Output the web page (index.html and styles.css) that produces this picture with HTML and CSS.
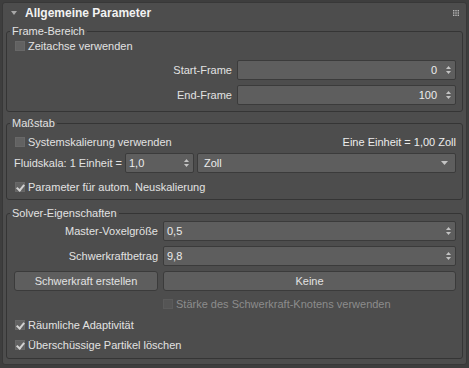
FILE: index.html
```html
<!DOCTYPE html>
<html lang="de">
  <head>
    <meta charset="UTF-8" />
    <meta name="viewport" content="width=device-width, initial-scale=1.0" />
    <title>Allgemeine Parameter</title>
    <link rel="stylesheet" href="styles.css">
  </head>
  <body>
    <div class="rollout">
      <div class="rollout-head">
        <span class="caret"></span>
        <span class="rollout-title">Allgemeine Parameter</span>
        <svg class="grip" width="6" height="6" viewBox="0 0 6 6">
          <g fill="#b8b8b8">
            <rect x="0" y="0" width="1.4" height="1.4" /><rect x="2.3" y="0" width="1.4" height="1.4" /><rect x="4.6" y="0" width="1.4" height="1.4" />
            <rect x="0" y="2.3" width="1.4" height="1.4" /><rect x="2.3" y="2.3" width="1.4" height="1.4" /><rect x="4.6" y="2.3" width="1.4" height="1.4" />
            <rect x="0" y="4.6" width="1.4" height="1.4" /><rect x="2.3" y="4.6" width="1.4" height="1.4" /><rect x="4.6" y="4.6" width="1.4" height="1.4" />
          </g>
        </svg>
      </div>

      <!-- Frame-Bereich -->
      <fieldset class="group group-frame">
        <legend>Frame-Bereich</legend>
        <label class="check"><span class="box"></span>Zeitachse verwenden</label>
        <div class="field-row frame-row">
          <span class="field-label">Start-Frame</span>
          <div class="input spinner">
            <span class="value">0</span>
            <svg class="arrows" width="5" height="10" viewBox="0 0 5 10"><polygon points="0,4 2.5,1 5,4" /><polygon points="0,6 2.5,9 5,6" /></svg>
          </div>
        </div>
        <div class="field-row frame-row">
          <span class="field-label">End-Frame</span>
          <div class="input spinner">
            <span class="value">100</span>
            <svg class="arrows" width="5" height="10" viewBox="0 0 5 10"><polygon points="0,4 2.5,1 5,4" /><polygon points="0,6 2.5,9 5,6" /></svg>
          </div>
        </div>
      </fieldset>

      <!-- Maßstab -->
      <fieldset class="group group-scale">
        <legend>Maßstab</legend>
        <div class="scale-top">
          <label class="check"><span class="box"></span>Systemskalierung verwenden</label>
          <span class="unit-info">Eine Einheit = 1,00 Zoll</span>
        </div>
        <div class="fluid-row">
          <span class="fluid-label">Fluidskala: 1 Einheit =</span>
          <div class="input spinner left">
            <span class="value">1,0</span>
            <svg class="arrows" width="5" height="10" viewBox="0 0 5 10"><polygon points="0,4 2.5,1 5,4" /><polygon points="0,6 2.5,9 5,6" /></svg>
          </div>
          <div class="input dropdown">
            <span class="value">Zoll</span>
            <svg class="drop-arrow" width="7" height="4" viewBox="0 0 7 4"><polygon points="0,0 7,0 3.5,4" /></svg>
          </div>
        </div>
        <label class="check check-last"><span class="box checked"></span>Parameter für autom. Neuskalierung</label>
      </fieldset>

      <!-- Solver-Eigenschaften -->
      <fieldset class="group group-solver">
        <legend>Solver-Eigenschaften</legend>
        <div class="field-row solver-row">
          <span class="field-label">Master-Voxelgröße</span>
          <div class="input spinner left">
            <span class="value">0,5</span>
            <svg class="arrows" width="5" height="10" viewBox="0 0 5 10"><polygon points="0,4 2.5,1 5,4" /><polygon points="0,6 2.5,9 5,6" /></svg>
          </div>
        </div>
        <div class="field-row solver-row">
          <span class="field-label">Schwerkraftbetrag</span>
          <div class="input spinner left">
            <span class="value">9,8</span>
            <svg class="arrows" width="5" height="10" viewBox="0 0 5 10"><polygon points="0,4 2.5,1 5,4" /><polygon points="0,6 2.5,9 5,6" /></svg>
          </div>
        </div>
        <div class="field-row solver-row">
          <button class="btn">Schwerkraft erstellen</button>
          <button class="btn">Keine</button>
        </div>
        <div class="field-row solver-row check-row">
          <span></span>
          <label class="check disabled"><span class="box"></span>Stärke des Schwerkraft-Knotens verwenden</label>
        </div>
        <label class="check"><span class="box checked"></span>Räumliche Adaptivität</label>
        <label class="check check-tight"><span class="box checked"></span>Überschüssige Partikel löschen</label>
      </fieldset>
    </div>
  </body>
</html>
```

FILE: styles.css
```css
* {
  box-sizing: border-box;
  margin: 0;
  padding: 0;
}

body {
  background-color: #3e3e3e;
  font-family: "Liberation Sans", Arial, sans-serif;
  font-size: 11px;
  color: #e2e2e2;
}

.rollout {
  margin: 2px 2px 0 2px;
  padding: 0 3px 5px 3px;
  background-color: #4d4d4d;
  border: 1px solid #383838;
  border-radius: 3px;
}

.rollout-head {
  display: flex;
  align-items: center;
  height: 20px;
}

.caret {
  width: 0;
  height: 0;
  margin-left: 5px;
  border-left: 3px solid transparent;
  border-right: 3px solid transparent;
  border-top: 4px solid #a8a8a8;
}

.rollout-title {
  margin-left: 8px;
  font-size: 12px;
  font-weight: bold;
  color: #f2f2f2;
}

.grip {
  margin-left: auto;
  margin-right: 4px;
}

.group {
  border: 1px solid #353535;
  border-radius: 3px;
  padding: 0 6px 0 7px;
}

.group legend {
  margin-left: -4px;
  padding: 0 2px;
  line-height: 14px;
  font-size: 11px;
  color: #e2e2e2;
}

.group-frame {
  margin-top: 1px;
  padding-bottom: 6px;
}

.group-scale {
  margin-top: 4px;
  padding-top: 4px;
  padding-bottom: 4px;
}

.group-solver {
  margin-top: 6px;
  padding-top: 1px;
  padding-bottom: 5px;
}

.check {
  display: flex;
  align-items: center;
  height: 16px;
  margin-left: 1px;
}

.box {
  width: 10px;
  height: 10px;
  margin-right: 3px;
  background-color: #626262;
  border: 1px solid #686868;
  position: relative;
}

.box.checked::after {
  content: "";
  position: absolute;
  left: 2px;
  top: 0px;
  width: 3px;
  height: 6px;
  border-right: 2px solid #d2d2d2;
  border-bottom: 2px solid #d2d2d2;
  transform: rotate(40deg);
}

.check.disabled {
  color: #8c8c8c;
  margin-left: 0;
}

.check.disabled .box {
  background-color: #555555;
  border-color: #5b5b5b;
}

.field-row {
  display: grid;
  column-gap: 5px;
  align-items: center;
}

.frame-row {
  grid-template-columns: 1fr 219px;
  margin-top: 5px;
}

.frame-row:first-of-type {
  margin-top: 6px;
}

.field-label {
  text-align: right;
}

.input {
  display: flex;
  align-items: center;
  height: 20px;
  background-color: #5e5e5e;
  border: 1px solid #3b3b3b;
  border-radius: 2px;
  color: #ececec;
}

.spinner {
  justify-content: flex-end;
  padding-right: 4px;
}

.spinner .value {
  margin-right: 9px;
}

.spinner.left {
  justify-content: space-between;
  padding-left: 3px;
}

.arrows {
  fill: #c4c4c4;
}

.scale-top {
  display: flex;
  justify-content: space-between;
  align-items: center;
}

.unit-info {
  color: #ececec;
}

.fluid-row {
  display: flex;
  align-items: center;
  margin-top: 3px;
}

.fluid-label {
  width: 111px;
}

.fluid-row .spinner {
  width: 69px;
}

.dropdown {
  flex: 1;
  margin-left: 3px;
  justify-content: space-between;
  padding: 0 7px 0 6px;
}

.drop-arrow {
  fill: #c4c4c4;
}

.check-last {
  margin-top: 6px;
}

.solver-row {
  grid-template-columns: 144px 1fr;
  margin-top: 5px;
}

.solver-row:first-of-type {
  margin-top: 0;
}

.btn {
  height: 20px;
  background-color: #5e5e5e;
  border: 1px solid #3b3b3b;
  border-radius: 3px;
  font-family: inherit;
  font-size: 11px;
  color: #e2e2e2;
}

.check-row {
  height: 16px;
}

.group-solver > .check {
  margin-top: 5px;
}

.group-solver > .check-tight {
  margin-top: 4px;
}
```
